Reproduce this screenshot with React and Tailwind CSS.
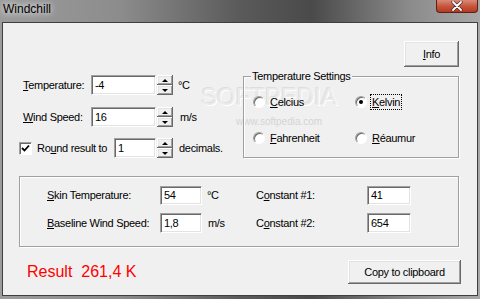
import React from "react";

const raised =
  "bg-[#f0f0f0] shadow-[inset_-1px_-1px_0_#696969,inset_1px_1px_0_#ffffff,inset_-2px_-2px_0_#a0a0a0,inset_2px_2px_0_#e3e3e3]";
const sunken =
  "bg-white border border-t-[#a0a0a0] border-l-[#a0a0a0] border-r-white border-b-white shadow-[inset_1px_1px_0_#696969,inset_-1px_-1px_0_#e3e3e3]";
const etched =
  "border border-[#a0a0a0] shadow-[inset_1px_1px_0_#ffffff,1px_1px_0_#ffffff]";

const Field = ({ value, className }) => (
  <div className={`${sunken} ${className} flex items-center pl-[3px] leading-none`}>
    {value}
  </div>
);

const Spin = () => (
  <div className="flex flex-col w-[16px] h-[20px] ml-[1px]">
    <div className={`${raised} h-[10px] flex items-center justify-center`}>
      <div className="w-0 h-0 border-l-[3px] border-r-[3px] border-b-[3px] border-l-transparent border-r-transparent border-b-black" />
    </div>
    <div className={`${raised} h-[10px] flex items-center justify-center`}>
      <div className="w-0 h-0 border-l-[3px] border-r-[3px] border-t-[3px] border-l-transparent border-r-transparent border-t-black" />
    </div>
  </div>
);

const Radio = ({ children, checked, focus }) => (
  <div className="flex items-center h-[16px]">
    <div className="w-[12px] h-[12px] rounded-full bg-white border border-t-[#a0a0a0] border-l-[#a0a0a0] border-r-white border-b-white shadow-[inset_1px_1px_0_#696969] flex items-center justify-center">
      {checked && <div className="w-[4px] h-[4px] rounded-full bg-black" />}
    </div>
    {focus ? (
      <span className="ml-[3px] px-[1px] py-[1px] border border-dotted border-black leading-[12px]">
        {children}
      </span>
    ) : (
      <span className="ml-[5px] leading-[12px]">{children}</span>
    )}
  </div>
);

export default function App() {
  return (
    <div className="w-[480px] h-[299px] overflow-hidden bg-[linear-gradient(to_right,#9c9c9c_0%,#8c8c8c_25%,#5a5a5a_50%,#4a4a4a_65%,#8a8a8a_85%,#a8a8a8_100%)] font-['Liberation_Sans',Arial,sans-serif] text-[11px] tracking-[-0.3px] text-black">
      <div className="h-[22px] flex items-start justify-between">
        <span className="ml-[3px] mt-[2px] text-[12px] tracking-normal leading-[14px] [text-shadow:0_0_6px_rgba(255,255,255,0.9),0_0_10px_rgba(255,255,255,0.6)]">
          Windchill
        </span>
        <div className="w-[42px] h-[13px] mr-[2px] rounded-b-[4px] border border-t-0 border-[#5e1f16] bg-[linear-gradient(to_bottom,#d98a77,#c5533b_55%,#b73a22)] flex items-center justify-center">
          <svg width="12" height="10" viewBox="0 0 12 10">
            <path d="M2 1 L10 9 M10 1 L2 9" stroke="#3b2a2a" strokeWidth="3.2" strokeLinecap="round" />
            <path d="M2 1 L10 9 M10 1 L2 9" stroke="#ffffff" strokeWidth="1.8" strokeLinecap="round" />
          </svg>
        </div>
      </div>

      <div className="mx-[2px] h-[274px] border border-[#3f3f3f] bg-[#f0f0f0] relative">
        {/* faint watermark */}
        <div className="absolute left-[198px] top-[62px] text-[24px] leading-[24px] tracking-normal text-[#ebebeb] [text-shadow:1px_1px_0_#ffffff,-1px_-1px_0_#dedede] pointer-events-none">
          SOFTPEDIA
        </div>
        <div className="absolute left-[233px] top-[93px] text-[10px] leading-[12px] tracking-normal text-[#d4d4d4] pointer-events-none">
          www.softpedia.com
        </div>

        <div className="flex justify-between pl-[16px] pr-[18px] pt-[18px] relative">
          <div className="flex flex-col mt-[34px]">
            <div className="flex items-center h-[20px] pl-[4px]">
              <span className="w-[68px]">
                <u>T</u>emperature:
              </span>
              <Field value="-4" className="w-[65px] h-[20px]" />
              <Spin />
              <span className="ml-[5px]">°C</span>
            </div>
            <div className="flex items-center h-[20px] pl-[4px] mt-[12px]">
              <span className="w-[68px]">
                <u>W</u>ind Speed:
              </span>
              <Field value="16" className="w-[65px] h-[20px]" />
              <Spin />
              <span className="ml-[7px]">m/s</span>
            </div>
            <div className="flex items-center h-[20px] mt-[11px]">
              <div className="w-[13px] h-[13px] bg-white border border-t-[#a0a0a0] border-l-[#a0a0a0] border-r-white border-b-white shadow-[inset_1px_1px_0_#696969] flex items-center justify-center">
                <svg width="9" height="9" viewBox="0 0 9 9">
                  <path d="M1 4 L3.5 6.5 L8 1.5" stroke="#000" strokeWidth="1.8" fill="none" />
                </svg>
              </div>
              <span className="ml-[5px] w-[77px]">
                Ro<u>u</u>nd result to
              </span>
              <Field value="1" className="w-[42px] h-[20px]" />
              <Spin />
              <span className="ml-[6px]">decimals.</span>
            </div>
          </div>

          <div className="flex flex-col">
            <div className={`${raised} self-end w-[55px] h-[26px] flex items-center justify-center`}>
              <span>
                <u>I</u>nfo
              </span>
            </div>
            <div className={`${etched} mt-[9px] w-[216px] h-[82px] flex flex-col`}>
              <span className="-mt-[7px] ml-[7px] px-[1px] w-fit bg-[#f0f0f0] leading-[13px]">
                Temperature Settings
              </span>
              <div className="grid grid-cols-[102px_1fr] pl-[9px] mt-[11px] gap-y-[20px]">
                <Radio>
                  <u>C</u>elcius
                </Radio>
                <Radio checked focus>
                  <u>K</u>elvin
                </Radio>
                <Radio>
                  <u>F</u>ahrenheit
                </Radio>
                <Radio>
                  <u>R</u>éaumur
                </Radio>
              </div>
            </div>
          </div>
        </div>

        <div className={`${etched} ml-[16px] mr-[18px] mt-[18px] h-[71px] pl-[27px] pt-[9px]`}>
          <div className="grid grid-cols-[113px_42px_54px_111px_44px] gap-y-[8px] items-center">
            <span>
              <u>S</u>kin Temperature:
            </span>
            <Field value="54" className="h-[19px]" />
            <span className="pl-[5px]">°C</span>
            <span>
              C<u>o</u>nstant #1:
            </span>
            <Field value="41" className="h-[19px]" />

            <span>
              <u>B</u>aseline Wind Speed:
            </span>
            <Field value="1,8" className="h-[20px]" />
            <span className="pl-[6px]">m/s</span>
            <span>
              C<u>o</u>nstant #2:
            </span>
            <Field value="654" className="h-[20px]" />
          </div>
        </div>

        <div className="flex items-center justify-between mt-[13px] pl-[24px] pr-[16px]">
          <span className="text-[16px] tracking-normal text-[#ff0000]">Result&nbsp; 261,4 K</span>
          <div className={`${raised} w-[113px] h-[24px] flex items-center justify-center`}>
            Copy to clipboard
          </div>
        </div>
      </div>
    </div>
  );
}
